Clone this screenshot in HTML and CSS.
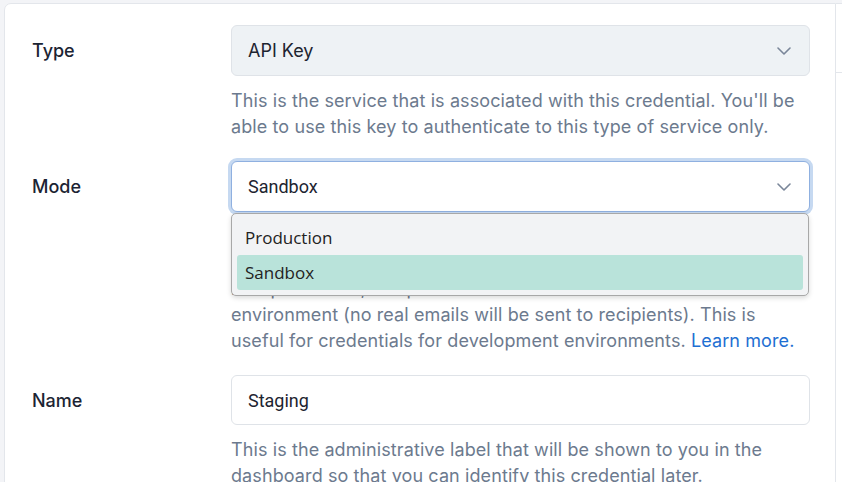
FILE: index.html
```html
<!DOCTYPE html>
<html lang="en">
<head>
    <meta charset="UTF-8">
    <meta name="viewport" content="width=device-width, initial-scale=1.0">
    <title>Edit Credential</title>
    <link rel="stylesheet" href="styles.css">
</head>
<body>

<div class="layout">
    <!-- Credential form -->
    <form class="card">
        <div class="row">
            <label class="label">Type</label>
            <div class="field">
                <div class="select disabled">
                    <span>API Key</span>
                    <svg class="chevron" width="14" height="8" viewBox="0 0 14 8"><path d="M1 1l6 6 6-6" fill="none" stroke="#7a8699" stroke-width="1.6" stroke-linecap="round" stroke-linejoin="round"/></svg>
                </div>
                <p class="help">This is the service that is associated with this credential. You'll be able to use this key to authenticate to this type of service only.</p>
            </div>
        </div>

        <div class="row">
            <label class="label">Mode</label>
            <div class="field">
                <div class="select focused">
                    <span>Sandbox</span>
                    <svg class="chevron" width="14" height="8" viewBox="0 0 14 8"><path d="M1 1l6 6 6-6" fill="none" stroke="#7a8699" stroke-width="1.6" stroke-linecap="round" stroke-linejoin="round"/></svg>
                </div>
                <!-- open dropdown list -->
                <ul class="options">
                    <li>Production</li>
                    <li class="active">Sandbox</li>
                </ul>
                <p class="help">Production keys deliver every message to its real recipients. Sandbox keys let you try the whole sending flow safely, as all mail is kept in a test, sample<br>environment (no real emails will be sent to recipients). This is useful for credentials for development environments. <a href="#">Learn more.</a></p>
            </div>
        </div>

        <div class="row">
            <label class="label">Name</label>
            <div class="field">
                <div class="input">Staging</div>
                <p class="help">This is the administrative label that will be shown to you in the dashboard so that you can identify this credential later.</p>
            </div>
        </div>
    </form>

    <!-- Side panel -->
    <aside class="side">
        <div class="side-head"></div>
    </aside>
</div>

</body>
</html>
```

FILE: styles.css
```css
html, body {
    margin: 0;
    height: 100%;
    overflow: hidden;
}
body {
    background-color: #f3f4f7;
    font-family: Inter, "Noto Sans", sans-serif;
}
.layout {
    display: flex;
    padding: 3px 0 0 4px;
}
.card {
    width: 832px;
    flex: none;
    box-sizing: border-box;
    background-color: white;
    border: 1px solid #e3e6eb;
    border-radius: 7px 0 0 0;
    padding: 21px 25px 40px 27px;
    display: flex;
    flex-direction: column;
    gap: 21px;
}
.side {
    flex: 1;
    background-color: white;
    border-top: 1px solid #e3e6eb;
    min-height: 600px;
}
.side-head {
    height: 68px;
    border-bottom: 1px solid #e3e6eb;
}
.row {
    display: grid;
    grid-template-columns: 199px 1fr;
}
.label {
    font-size: 18px;
    font-weight: 500;
    color: #1c2433;
    line-height: 51px;
}
.field {
    position: relative;
}
.select, .input {
    height: 51px;
    box-sizing: border-box;
    border: 1px solid #dfe3e8;
    border-radius: 6px;
    display: flex;
    align-items: center;
    justify-content: space-between;
    padding: 0 18px 0 16px;
    font-family: Roboto, sans-serif;
    font-size: 18px;
    color: #1d2430;
    background-color: white;
}
.input {
    height: 50px;
}
.select.disabled {
    background-color: #eef2f5;
}
.select.disabled span {
    font-family: Inter, sans-serif;
    font-size: 18px;
}
.select.focused {
    border-color: #8fb0e0;
    box-shadow: 0 0 0 3px #c6d9f1;
}
.help {
    margin: 12px 0 0;
    font-size: 18px;
    letter-spacing: 0.1px;
    line-height: 26px;
    color: #6c7a8e;
}
.help a {
    color: #1e6fd2;
    text-decoration: none;
}
.options {
    position: absolute;
    top: 52px;
    left: 0;
    right: 1px;
    z-index: 2;
    margin: 0;
    padding: 6px 5px 5px;
    list-style: none;
    background-color: #f2f3f5;
    border: 1px solid #a8a8a8;
    border-radius: 5px;
    box-shadow: 0 2px 5px rgba(0, 0, 0, 0.15);
    font-family: "Open Sans", sans-serif;
    font-size: 17px;
    color: #222;
}
.options li {
    height: 35px;
    line-height: 35px;
    padding: 0 8px;
    border-radius: 3px;
}
.options li.active {
    background-color: #b9e3da;
}
```
